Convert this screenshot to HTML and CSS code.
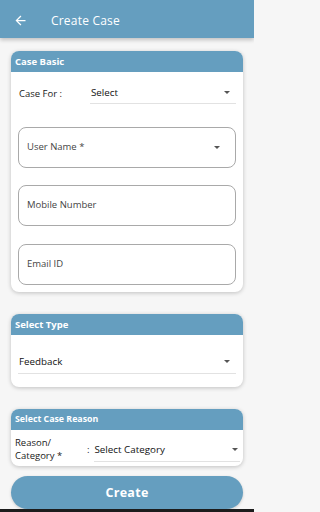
FILE: index.html
```html
<!DOCTYPE html>
<html>
<head>
<meta charset="utf-8">
<link rel="stylesheet" href="styles.css">
</head>
<body>
<div class="screen">
  <header class="appbar">
    <svg class="back" viewBox="0 0 24 24" width="15" height="15"><path d="M20 11H7.83l5.59-5.59L12 4l-8 8 8 8 1.41-1.41L7.83 13H20v-2z" fill="#fff"/></svg>
    <span class="title">Create Case</span>
  </header>
  <main class="content">
    <section class="card card-basic">
      <div class="card-head">Case Basic</div>
      <div class="card-body">
        <div class="row">
          <span class="label">Case For :</span>
          <div class="select underline"><span>Select</span><i class="caret"></i></div>
        </div>
        <div class="field field-first"><span class="hint">User Name *</span><i class="caret"></i></div>
        <div class="field"><span class="hint">Mobile Number</span></div>
        <div class="field"><span class="hint">Email ID</span></div>
      </div>
    </section>
    <section class="card card-type">
      <div class="card-head">Select Type</div>
      <div class="card-body">
        <div class="select underline full"><span>Feedback</span><i class="caret"></i></div>
      </div>
    </section>
    <section class="card card-reason">
      <div class="card-head small">Select Case Reason</div>
      <div class="card-body reason-body">
        <span class="label two">Reason/<br>Category *</span>
        <span class="colon">:</span>
        <div class="select underline reason"><span>Select Category</span><i class="caret"></i></div>
      </div>
    </section>
    <button class="create">Create</button>
  </main>
  <div class="navbar"></div>
</div>
</body>
</html>
```
FILE: styles.css
```css
* { box-sizing: border-box; }
html, body { margin: 0; padding: 0; background: #f6f6f6; }
body {
  width: 254px;
  height: 512px;
  overflow: hidden;
  font-family: "Open Sans", "DejaVu Sans", sans-serif;
  color: #1a1a1a;
}
.screen { display: flex; flex-direction: column; height: 512px; }
.appbar {
  height: 38px;
  flex: none;
  background: #659ebf;
  display: flex;
  align-items: center;
  padding-top: 3px;
  box-shadow: 0 2px 4px rgba(0,0,0,0.22);
  position: relative;
  z-index: 2;
}
.back { margin-left: 13px; }
.title {
  margin-left: 23px;
  color: #fff;
  font-size: 12px;
  letter-spacing: 0.2px;
}
.content {
  flex: 1;
  padding: 13px 11px 0;
  display: flex;
  flex-direction: column;
}
.card {
  background: #fff;
  border-radius: 8px;
  box-shadow: 0 1px 4px rgba(0,0,0,0.22);
  overflow: hidden;
  flex: none;
}
.card-head {
  background: #659ebf;
  color: #fff;
  font-weight: 700;
  font-size: 9.5px;
  height: 21px;
  line-height: 21px;
  padding-left: 4px;
}
.card-head.small { font-size: 8.8px; }
.card-basic .card-body { padding: 11px 7px 7px; }
.row { display: flex; align-items: center; }
.label { font-size: 9.5px; padding-left: 1px; width: 72px; flex: none; }
.select {
  display: flex;
  align-items: center;
  justify-content: space-between;
  font-size: 9.8px;
  color: #111;
  height: 21px;
  padding: 0 6px 2px 1px;
}
.underline { border-bottom: 1px solid #e2e2e2; }
.row .select { flex: 1; }
.caret {
  width: 0; height: 0;
  border-left: 3.5px solid transparent;
  border-right: 3.5px solid transparent;
  border-top: 3.5px solid #555;
  display: block;
}
.field {
  height: 41px;
  border: 1px solid #a9a9a9;
  border-radius: 8px;
  margin-top: 17px;
  display: flex;
  align-items: center;
  justify-content: space-between;
  padding: 0 15px 0 8px;
}
.field + .field + .field { margin-top: 18px; }
.field-first { margin-top: 23px; }
.hint { font-size: 9.5px; color: #444; margin-top: -2px; }
.card-type { margin-top: 22px; }
.card-type .card-body { padding: 17px 7px 13px; }
.full { height: 22px; padding-bottom: 2px; }
.card-reason { margin-top: 22px; }
.reason-body {
  display: flex;
  align-items: center;
  height: 36px;
  padding: 2px 3px 0 4px;
}
.label.two { width: 72px; line-height: 13px; padding-left: 0; }
.colon { font-size: 9.5px; margin-right: 4px; }
.reason { flex: 1; height: 22px; margin-top: 4px; padding-right: 2px; }
.create {
  margin-top: 10px;
  height: 33px;
  flex: none;
  border: none;
  border-radius: 17px;
  background: #659ebf;
  color: #fff;
  font-family: inherit;
  font-weight: 700;
  font-size: 12.5px;
  letter-spacing: 0.3px;
  box-shadow: 0 1px 3px rgba(0,0,0,0.18);
}
.navbar { height: 3px; background: #1c1c1c; margin-top: auto; flex: none; }
```
